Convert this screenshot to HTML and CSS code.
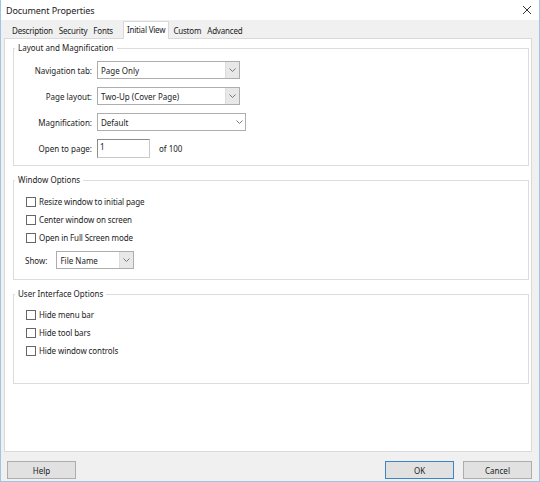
FILE: index.html
```html
<!DOCTYPE html>
<html>
<head>
<meta charset="utf-8">
<link rel="stylesheet" href="styles.css">
</head>
<body>
<div class="window">
  <div class="titlebar">
    <span class="title">Document Properties</span>
    <svg class="close" width="10" height="10" viewBox="0 0 10 10"><path d="M1 1L9 9M9 1L1 9" stroke="#333" stroke-width="1" fill="none"/></svg>
  </div>
  <div class="tabs">
    <span class="tab">Description</span>
    <span class="tab">Security</span>
    <span class="tab">Fonts</span>
    <span class="tab active">Initial View</span>
    <span class="tab">Custom</span>
    <span class="tab">Advanced</span>
  </div>
  <div class="panel">
    <fieldset class="group g1">
      <legend>Layout and Magnification</legend>
      <div class="form">
        <label>Navigation tab:</label>
        <div class="select boxed w1"><span>Page Only</span><span class="arrow"><svg width="7" height="4" viewBox="0 0 7 4"><path d="M0.5 0.5L3.5 3.5L6.5 0.5" stroke="#777" fill="none"/></svg></span></div>
        <label>Page layout:</label>
        <div class="select boxed w1"><span>Two-Up (Cover Page)</span><span class="arrow"><svg width="7" height="4" viewBox="0 0 7 4"><path d="M0.5 0.5L3.5 3.5L6.5 0.5" stroke="#777" fill="none"/></svg></span></div>
        <label>Magnification:</label>
        <div class="select plain w2"><span>Default</span><span class="arrow"><svg width="7" height="4" viewBox="0 0 7 4"><path d="M0.5 0.5L3.5 3.5L6.5 0.5" stroke="#777" fill="none"/></svg></span></div>
        <label>Open to page:</label>
        <div class="pagerow"><div class="input">1</div><span class="of">of 100</span></div>
      </div>
    </fieldset>
    <fieldset class="group g2">
      <legend>Window Options</legend>
      <div class="checks">
        <div class="check"><span class="box"></span>Resize window to initial page</div>
        <div class="check"><span class="box"></span>Center window on screen</div>
        <div class="check"><span class="box"></span>Open in Full Screen mode</div>
      </div>
      <div class="showrow">
        <span>Show:</span>
        <div class="select boxed w3"><span>File Name</span><span class="arrow"><svg width="7" height="4" viewBox="0 0 7 4"><path d="M0.5 0.5L3.5 3.5L6.5 0.5" stroke="#777" fill="none"/></svg></span></div>
      </div>
    </fieldset>
    <fieldset class="group g3">
      <legend>User Interface Options</legend>
      <div class="checks">
        <div class="check"><span class="box"></span>Hide menu bar</div>
        <div class="check"><span class="box"></span>Hide tool bars</div>
        <div class="check"><span class="box"></span>Hide window controls</div>
      </div>
    </fieldset>
  </div>
  <div class="footer">
    <button class="btn">Help</button>
    <div class="right">
      <button class="btn default">OK</button>
      <button class="btn">Cancel</button>
    </div>
  </div>
</div>
</body>
</html>
```
FILE: styles.css
```css
html, body {
  margin: 0;
  padding: 0;
}
body {
  width: 540px;
  height: 482px;
  overflow: hidden;
  font-family: "Noto Sans", "Open Sans", sans-serif;
  font-size: 8px;
  color: #222;
}
.window {
  box-sizing: border-box;
  width: 540px;
  height: 482px;
  background: #f0f0f0;
  border-left: 1px solid #9fc4e6;
  border-right: 1px solid #9fc4e6;
  border-bottom: 1px solid #9fc4e6;
  display: flex;
  flex-direction: column;
}
.titlebar {
  height: 20px;
  background: #fff;
  display: flex;
  align-items: center;
  justify-content: space-between;
  padding: 0 7px 0 5px;
  font-size: 9px;
  letter-spacing: -0.1px;
}
.tabs {
  height: 18px;
  display: flex;
  align-items: flex-end;
  padding-left: 8px;
  letter-spacing: -0.2px;
}
.tab {
  height: 15px;
  line-height: 15px;
  padding: 0 3px;
}
.tab.active {
  height: 18px;
  line-height: 15px;
  background: #fff;
  border: 1px solid #d9d9d9;
  border-bottom: none;
  box-sizing: border-box;
  padding: 0 3px;
  margin: 0 1px 0 7px;
  position: relative;
  top: 1px;
}
.panel {
  height: 414px;
  box-sizing: border-box;
  margin: 0 7px 0 3px;
  background: #fff;
  border: 1px solid #d9d9d9;
  padding: 3px 2px 0 8px;
  display: flex;
  flex-direction: column;
  gap: 8px;
}
.group {
  margin: 0;
  border: 1px solid #dcdcdc;
  padding: 0;
  min-width: 0;
}
.group legend {
  padding: 0 3px;
  margin-left: 1px;
  line-height: 12px;
  height: 12px;
}
.g1 { height: 124px; box-sizing: border-box; }
.g2 { height: 106px; box-sizing: border-box; }
.g3 { height: 96px; box-sizing: border-box; }
.form {
  display: grid;
  grid-template-columns: 78px auto;
  column-gap: 5px;
  row-gap: 8px;
  align-items: center;
  padding-top: 7px;
}
.form label {
  text-align: right;
}
.select {
  height: 18px;
  box-sizing: border-box;
  border: 1px solid #adadad;
  background: #fff;
  display: flex;
  align-items: center;
  justify-content: space-between;
  padding-left: 3px;
}
.select.boxed .arrow {
  width: 13px;
  height: 16px;
  background: #e8e8e8;
  border-left: 1px solid #dcdcdc;
  display: flex;
  align-items: center;
  justify-content: center;
}
.select.plain .arrow {
  width: 12px;
  display: flex;
  align-items: center;
  justify-content: center;
}
.w1 { width: 143px; }
.w2 { width: 149px; }
.w3 { width: 78px; }
.pagerow {
  display: flex;
  align-items: center;
  gap: 9px;
}
.input {
  width: 53px;
  height: 19px;
  box-sizing: border-box;
  border: 1px solid #c8c8c8;
  border-top-color: #8c8c8c;
  border-left-color: #8c8c8c;
  padding-left: 2px;
  line-height: 14px;
}
.checks {
  display: flex;
  flex-direction: column;
  gap: 5px;
  padding: 9px 0 0 12px;
}
.g3 .checks {
  padding-top: 8px;
}
.check {
  display: flex;
  align-items: center;
  height: 13px;
  letter-spacing: -0.1px;
}
.box {
  width: 8px;
  height: 8px;
  border: 1px solid #666;
  background: #fff;
  margin-right: 3px;
}
.showrow {
  display: flex;
  align-items: center;
  gap: 9px;
  padding: 7px 0 0 11px;
}
.footer {
  flex: 1;
  display: flex;
  justify-content: space-between;
  align-items: flex-start;
  padding: 9px 7px 0 6px;
}
.right {
  display: flex;
  gap: 9px;
}
.btn {
  width: 69px;
  height: 18px;
  box-sizing: border-box;
  background: #e1e1e1;
  border: 1px solid #adadad;
  font: inherit;
  color: #222;
  padding: 0;
}
.btn.default {
  border: 1px solid #3c84c8;
}
```
